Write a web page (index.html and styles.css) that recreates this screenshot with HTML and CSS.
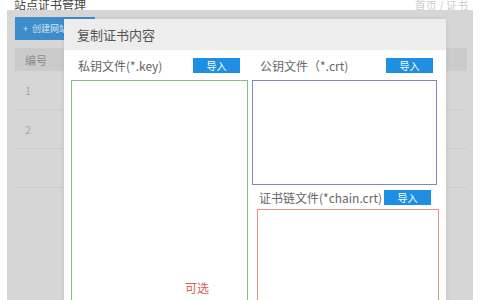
FILE: index.html
```html
<!DOCTYPE html>
<html lang="zh-CN">
<head>
  <meta charset="UTF-8">
  <meta name="viewport" content="width=device-width, initial-scale=1.0">
  <title>证书</title>
  <link rel="stylesheet" href="styles.css">
</head>
<body>
  <div class="topbar">
    <span class="crumb">站点证书管理</span>
    <span class="crumb crumb-right">首页 / 证书</span>
  </div>
  <div class="panel">
    <div class="btn-create">+ &nbsp;创建网站</div>
    <div class="table">
      <div class="row row-head"><span>编号</span></div>
      <div class="row"><span>1</span></div>
      <div class="row"><span>2</span></div>
      <div class="row"><span></span></div>
    </div>

    <div class="dialog">
      <div class="dialog-title">复制证书内容</div>
      <div class="dialog-body">
        <div class="col col-left">
          <div class="field-head">
            <span class="label">私钥文件(*.key)</span>
            <span class="btn-import">导入</span>
          </div>
          <textarea class="box box-key"></textarea>
          <span class="hint">可选</span>
        </div>
        <div class="col col-right">
          <div class="field-head">
            <span class="label">公钥文件（*.crt)</span>
            <span class="btn-import">导入</span>
          </div>
          <textarea class="box box-crt"></textarea>
          <div class="field-head field-chain">
            <span class="label">证书链文件(*chain.crt)</span>
            <span class="btn-import">导入</span>
          </div>
          <textarea class="box box-chain"></textarea>
        </div>
      </div>
    </div>
  </div>
</body>
</html>
```

FILE: styles.css
```css
body {
  margin: 0;
  padding: 0;
  background: white;
  font-family: "Noto Sans CJK SC", "Noto Sans", sans-serif;
  overflow: hidden;
  height: 300px;
}

.topbar {
  height: 10px;
  display: flex;
  justify-content: space-between;
  align-items: flex-end;
  overflow: hidden;
  padding: 0 12px 0 14px;
}

.crumb {
  font-size: 12px;
  line-height: 10px;
  color: #444;
}

.crumb-right {
  color: #ccc;
  font-size: 11px;
}

.panel {
  position: relative;
  margin: 0 7px;
  height: 290px;
  background: #d6d6d6;
  padding: 7px 6px 0 8px;
  box-sizing: border-box;
}

.btn-create {
  width: 80px;
  height: 23px;
  background: #3f8ccb;
  color: #d8e6f2;
  font-size: 9px;
  line-height: 23px;
  padding-left: 8px;
  box-sizing: border-box;
}

.table {
  margin-top: 8px;
}

.row {
  height: 38px;
  border-bottom: 1px solid #cdcdcd;
  font-size: 11px;
  color: #a8a8a8;
  display: flex;
  align-items: center;
  padding-left: 10px;
}

.row-head {
  height: 23px;
  background: #cbcbcb;
  color: #8a8a8a;
  border-bottom: none;
}

.dialog {
  position: absolute;
  left: 57px;
  top: 9px;
  width: 382px;
  height: 300px;
  background: white;
  box-shadow: 0 0 4px rgba(0, 0, 0, 0.1);
}

.dialog-title {
  height: 31px;
  background: #ededed;
  font-size: 13px;
  color: #555;
  line-height: 31px;
  padding-left: 13px;
}

.dialog-body {
  display: flex;
  gap: 4px;
  padding: 0 7px;
}

.col {
  display: flex;
  flex-direction: column;
  position: relative;
}

.col-left {
  width: 177px;
}

.col-right {
  width: 187px;
}

.field-head {
  height: 30px;
  display: flex;
  align-items: center;
  justify-content: space-between;
  padding: 0 8px 0 7px;
}

.col-right .field-head {
  padding: 0 6px 0 8px;
}

.col-right .field-chain {
  height: 24px;
  padding: 0 8px 0 7px;
}

.label {
  font-size: 12px;
  color: #666;
  white-space: nowrap;
}

.btn-import {
  width: 47px;
  height: 15px;
  background: #1e8fe2;
  color: white;
  font-size: 10px;
  line-height: 15px;
  text-align: center;
}

.box {
  display: block;
  margin: 0;
  padding: 0;
  resize: none;
  outline: none;
  background: white;
  box-sizing: border-box;
}

.box-key {
  border: 1px solid #86bd86;
  height: 240px;
}

.box-crt {
  border: 1px solid #7f8abb;
  height: 105px;
  width: 185px;
}

.box-chain {
  border: 1px solid #e39292;
  height: 120px;
  width: 182px;
  margin-left: 5px;
}

.hint {
  position: absolute;
  left: 114px;
  top: 231px;
  font-size: 12px;
  line-height: 14px;
  color: #d46060;
}
```
